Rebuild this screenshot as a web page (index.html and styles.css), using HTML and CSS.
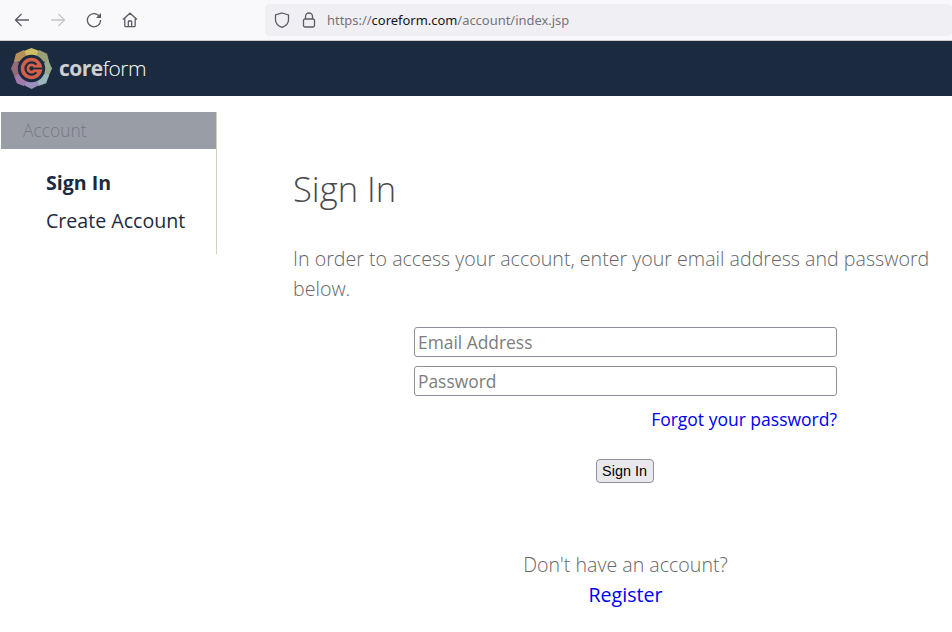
FILE: index.html
```html
<!DOCTYPE html>
<html lang="en">
<head>
    <meta charset="UTF-8">
    <title>Coreform Account</title>
    <link rel="stylesheet" href="styles.css">
</head>
<body>

    <!-- Browser toolbar -->
    <div class="toolbar">
        <div class="nav-buttons">
            <svg class="tool-icon" viewBox="0 0 16 16"><path d="M15 8H1.500M7.500 2 1.500 8l6 6"/></svg>
            <svg class="tool-icon faded" viewBox="0 0 16 16"><path d="M1 8h13.500M8.500 2l6 6-6 6"/></svg>
            <svg class="tool-icon" viewBox="0 0 16 16"><path d="M13.800 5A6.600 6.600 0 1 0 14.600 8"/><path class="solid" d="M15 1v5h-5z"/></svg>
            <svg class="tool-icon" viewBox="0 0 16 16"><path d="M1 7.500 8 1.200l7 6.300M2.800 6.500v7.200q0 1 1 1h8.400q1 0 1-1V6.500M6.300 14.500V9.800q0-.8.8-.8h1.800q.8 0 .8.8v4.700"/></svg>
        </div>
        <div class="url-bar">
            <svg class="url-icon" viewBox="0 0 16 16"><path d="M8 1 14.500 3v5c0 3.500-3 6-6.500 7.300C4.500 14 1.500 11.500 1.500 8V3z"/></svg>
            <svg class="url-icon" viewBox="0 0 16 16"><path d="M4.500 7V4.500a3.500 3.500 0 0 1 7 0V7"/><rect x="2.500" y="7" width="11" height="8" rx="1.500"/></svg>
            <span class="url">https://<b>coreform.com</b>/account/index.jsp</span>
        </div>
    </div>

    <!-- Site header -->
    <header class="site-header">
        <svg class="logo" viewBox="0 0 44 44">
            <g opacity="0.9">
                <polygon fill="#e3cf6a" points="14,4 22,1 30,4 27,10 17,10"/>
                <polygon fill="#a8ab80" points="30,3 38,7 40,15 33,15 27,9"/>
                <polygon fill="#a3b894" points="39,13 43,22 39,31 34,26 34,17"/>
                <polygon fill="#a5c6cf" points="40,29 37,37 29,40 27,34 34,27"/>
                <polygon fill="#a99ccb" points="30,39 22,43 14,39 17,34 27,34"/>
                <polygon fill="#b084b8" points="14,40 7,37 4,29 10,27 17,34"/>
                <polygon fill="#a2707f" points="5,31 1,22 5,13 10,17 10,26"/>
                <polygon fill="#c79a5e" points="4,15 6,7 14,3 17,9 10,15"/>
            </g>
            <circle cx="22" cy="22" r="14" fill="#1c2a3f"/>
            <circle cx="22" cy="22" r="11" fill="#d4604a"/>
            <path d="M27 18A6.300 6.300 0 1 0 27 26" fill="none" stroke="#1c2a3f" stroke-width="2.300"/>
            <path d="M22 22h11" stroke="#1c2a3f" stroke-width="1.800"/>
            <circle cx="22" cy="22" r="2.200" fill="#1c2a3f"/>
        </svg>
        <span class="brand"><b>core</b>form</span>
    </header>

    <div class="page">
        <!-- Sidebar -->
        <aside class="sidebar">
            <div class="side-title">Account</div>
            <ul class="side-menu">
                <li class="current">Sign In</li>
                <li>Create Account</li>
            </ul>
        </aside>

        <main class="content">
            <h1>Sign In</h1>
            <p class="intro">In order to access your account, enter your email address and password below.</p>

            <form class="signin-form">
                <input type="text" placeholder="Email Address">
                <input type="password" placeholder="Password">
                <a class="forgot" href="#">Forgot your password?</a>
                <button type="button">Sign In</button>
            </form>

            <div class="register">
                <p>Don't have an account?</p>
                <a href="#">Register</a>
            </div>
        </main>
    </div>

</body>
</html>
```

FILE: styles.css
```css
/* General styling */
body {
    font-family: "Open Sans", sans-serif;
    background-color: #fff;
    margin: 0;
    padding: 0;
    height: 632px;
    overflow: hidden;
}

/* Browser toolbar */
.toolbar {
    height: 40px;
    background-color: #f9f9fb;
    border-bottom: 1px solid #ccc;
    display: flex;
    align-items: center;
}

.nav-buttons {
    display: flex;
    gap: 20px;
    padding-left: 14px;
    width: 251px;
    box-sizing: border-box;
}

.tool-icon {
    width: 16px;
    height: 16px;
    fill: none;
    stroke: #5b5b66;
    stroke-width: 1.300;
}

.tool-icon .solid {
    fill: #5b5b66;
    stroke: none;
}

.tool-icon.faded {
    stroke: #c4c4c9;
}

.url-bar {
    margin-left: 14px;
    flex: 1;
    height: 32px;
    background-color: #f0f0f4;
    border-radius: 4px;
    display: flex;
    align-items: center;
    padding-left: 9px;
    gap: 11px;
}

.url-icon {
    width: 16px;
    height: 16px;
    fill: none;
    stroke: #5b5b66;
    stroke-width: 1.300;
}

.url {
    font-family: "Noto Sans", sans-serif;
    font-size: 12.950px;
    color: #73737d;
    margin-left: -1px;
}

.url b {
    font-weight: 400;
    color: #15141a;
}

/* Site header */
.site-header {
    height: 55px;
    background-color: #1c2a3f;
    display: flex;
    align-items: center;
    padding-left: 10px;
    gap: 6px;
}

.logo {
    width: 43px;
    height: 43px;
}

.brand {
    font-size: 21px;
    font-weight: 300;
    color: #fff;
    letter-spacing: -0.5px;
    margin-top: -2px;
}

.brand b {
    font-weight: 700;
    color: #cfcfd2;
}

.page {
    display: flex;
    align-items: flex-start;
    padding-top: 16px;
}

/* Sidebar */
.sidebar {
    width: 215px;
    margin-left: 1px;
    height: 142px;
    border-right: 1px solid #d2cfb8;
}

.side-title {
    height: 37px;
    line-height: 37px;
    padding-left: 22px;
    background-color: #999da6;
    color: #767a84;
    font-size: 17.400px;
    font-weight: 300;
}

.side-menu {
    list-style: none;
    margin: 15px 0 0;
    padding: 0 0 0 45px;
    font-size: 19.600px;
    line-height: 38px;
    color: #1c2a3f;
}

.side-menu .current {
    font-weight: 700;
}

/* Main content */
.content {
    width: 650px;
    margin-left: 76px;
    color: #666;
}

h1 {
    margin: 52px 0 0;
    font-size: 34.600px;
    line-height: 50px;
    font-weight: 300;
    color: #4a4a4a;
}

.intro {
    margin: 30px 0 0;
    font-size: 19.640px;
    line-height: 30px;
    font-weight: 300;
}

/* Form */
.signin-form {
    width: 423px;
    margin: 23px 0 0 121px;
    display: flex;
    flex-direction: column;
}

.signin-form input {
    height: 30px;
    padding: 0 3px;
    margin-bottom: 9px;
    font-family: "Open Sans", sans-serif;
    font-size: 17.400px;
    border: 1px solid #8f8f9d;
    border-radius: 3px;
    box-sizing: border-box;
}

.signin-form input::placeholder {
    color: #7d7d7d;
}

.forgot {
    align-self: flex-end;
    font-size: 17.500px;
    line-height: 24px;
    margin-top: 2px;
    color: #00e;
    text-decoration: none;
}

.signin-form button {
    align-self: center;
    width: 58px;
    height: 24px;
    margin-top: 28px;
    margin-right: 2px;
    padding: 0;
    font-family: "Liberation Sans", sans-serif;
    font-size: 14.400px;
    color: #000;
    background-color: #e9e9ed;
    border: 1px solid #8f8f9d;
    border-radius: 4px;
}

/* Register link */
.register {
    width: 423px;
    margin: 67px 0 0 121px;
    text-align: center;
    font-size: 19.600px;
    line-height: 30px;
    font-weight: 300;
}

.register p {
    margin: 0;
}

.register a {
    color: #00e;
    font-weight: 400;
    text-decoration: none;
}
```
